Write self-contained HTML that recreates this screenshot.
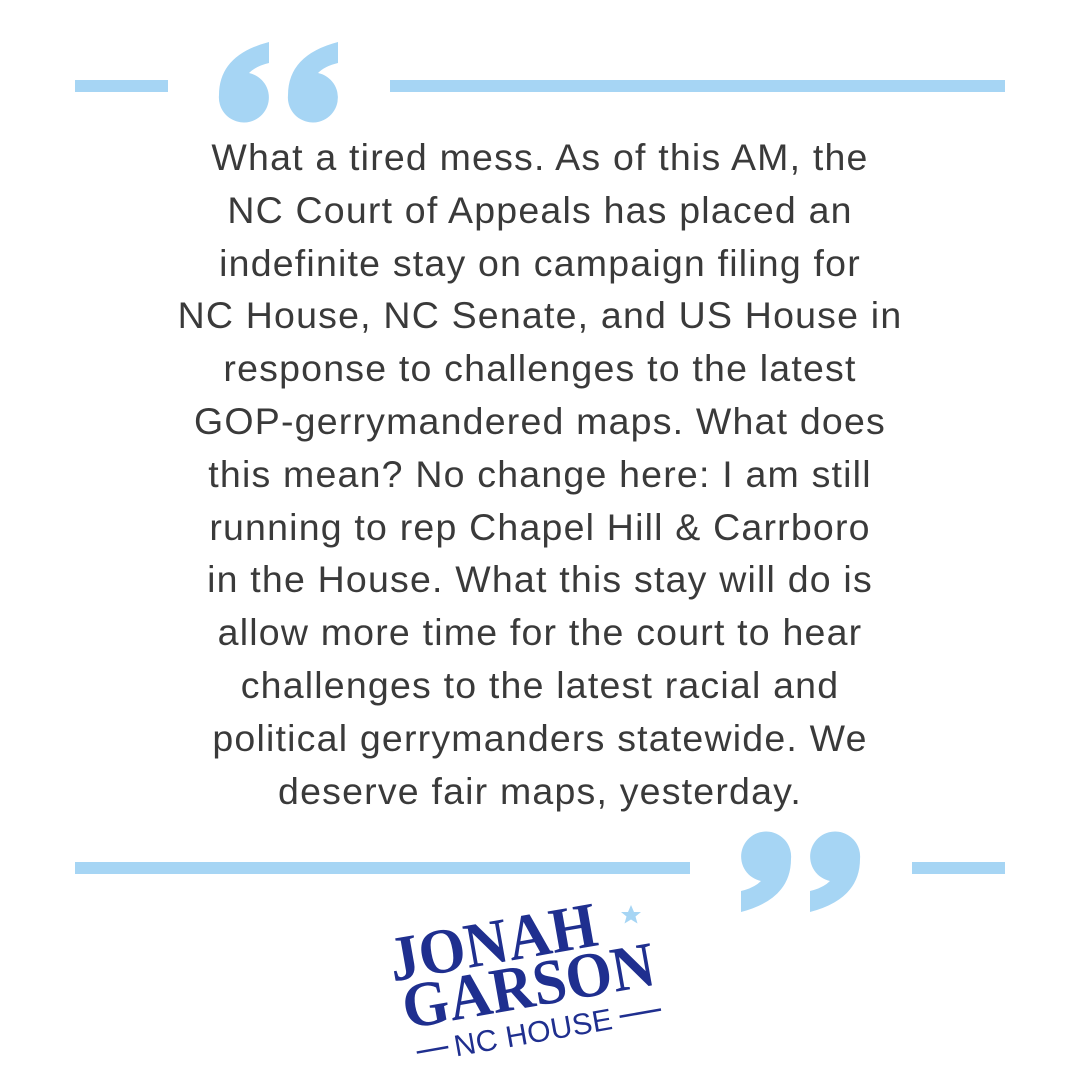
<!DOCTYPE html>
<html><head><meta charset="utf-8"><style>
html,body{margin:0;padding:0;background:#fff;}
body{width:1080px;height:1080px;position:relative;overflow:hidden;}
.bar{position:absolute;background:#a6d5f4;height:12px;}
.txt{position:absolute;left:0;width:1080px;top:131px;text-align:center;font-family:"Liberation Sans",sans-serif;font-size:37.5px;line-height:52.8px;color:#3a3a3a;letter-spacing:1.2px;}
.txt div{white-space:nowrap;}
</style></head><body>
<div class="bar" style="left:75px;top:80px;width:93px;"></div>
<div class="bar" style="left:390px;top:80px;width:615px;"></div>
<div class="bar" style="left:75px;top:862px;width:615px;"></div>
<div class="bar" style="left:912px;top:862px;width:93px;"></div>
<svg width="1080" height="1080" style="position:absolute;left:0;top:0">
<defs><path id="q" d="M50,0 L50,21 Q37,24 30,31 A25,25 0 1 1 0,53 Q0,13 50,0 Z" fill="#a6d5f4"/></defs>
<use href="#q" x="219" y="42"/>
<use href="#q" x="288" y="42"/>
<g transform="rotate(180 800 875)"><use href="#q" x="740" y="838"/><use href="#q" x="809" y="838"/></g>
<path d="M631,905 l3,7 7,0 -5.5,4.5 2,7 -6.5,-4 -6.5,4 2,-7 -5.5,-4.5 7,0z" fill="#a6d5f4"/>
<g transform="translate(0,6) rotate(-10 395 975)" fill="#1f2f8f" font-family="'Liberation Serif',serif" font-weight="bold">
<text x="393" y="975" font-size="64" textLength="210" lengthAdjust="spacingAndGlyphs">JONAH</text>
<text x="398" y="1024" font-size="64" textLength="255" lengthAdjust="spacingAndGlyphs">GARSON</text>
<text x="442" y="1060" font-size="30" font-weight="normal" font-family="'Liberation Sans',sans-serif" textLength="160" lengthAdjust="spacing">NC HOUSE</text>
<rect x="404" y="1048" width="32" height="2.5"/>
<rect x="610" y="1048" width="42" height="2.5"/>
</g>
</svg>
<div class="txt">
<div>What a tired mess. As of this AM, the</div>
<div>NC Court of Appeals has placed an</div>
<div>indefinite stay on campaign filing for</div>
<div>NC House, NC Senate, and US House in</div>
<div>response to challenges to the latest</div>
<div>GOP-gerrymandered maps. What does</div>
<div>this mean? No change here: I am still</div>
<div>running to rep Chapel Hill &amp; Carrboro</div>
<div>in the House. What this stay will do is</div>
<div>allow more time for the court to hear</div>
<div>challenges to the latest racial and</div>
<div>political gerrymanders statewide. We</div>
<div>deserve fair maps, yesterday.</div>
</div>
</body></html>
